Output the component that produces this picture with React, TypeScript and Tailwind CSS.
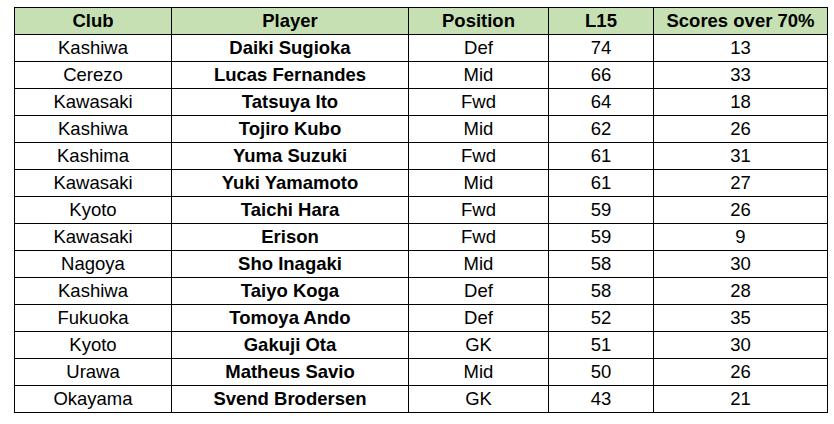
const rows: [string, string, string, number, number][] = [
  ["Kashiwa", "Daiki Sugioka", "Def", 74, 13],
  ["Cerezo", "Lucas Fernandes", "Mid", 66, 33],
  ["Kawasaki", "Tatsuya Ito", "Fwd", 64, 18],
  ["Kashiwa", "Tojiro Kubo", "Mid", 62, 26],
  ["Kashima", "Yuma Suzuki", "Fwd", 61, 31],
  ["Kawasaki", "Yuki Yamamoto", "Mid", 61, 27],
  ["Kyoto", "Taichi Hara", "Fwd", 59, 26],
  ["Kawasaki", "Erison", "Fwd", 59, 9],
  ["Nagoya", "Sho Inagaki", "Mid", 58, 30],
  ["Kashiwa", "Taiyo Koga", "Def", 58, 28],
  ["Fukuoka", "Tomoya Ando", "Def", 52, 35],
  ["Kyoto", "Gakuji Ota", "GK", 51, 30],
  ["Urawa", "Matheus Savio", "Mid", 50, 26],
  ["Okayama", "Svend Brodersen", "GK", 43, 21],
];

const cell = "border border-black h-[27px] p-0 text-center leading-none";

export default function App() {
  return (
    <div className="w-[834px] h-[424px] bg-white pt-[7px] pl-[14px] font-['Liberation_Sans',Arial,sans-serif] text-[18.5px] text-black">
      <table className="border-collapse table-fixed w-[813px]">
        <colgroup>
          <col className="w-[157px]" />
          <col className="w-[237px]" />
          <col className="w-[140px]" />
          <col className="w-[105px]" />
          <col className="w-[174px]" />
        </colgroup>
        <thead>
          <tr className="bg-[#c6e0b4]">
            {["Club", "Player", "Position", "L15", "Scores over 70%"].map((h) => (
              <th key={h} className={`${cell} font-bold`}>
                {h}
              </th>
            ))}
          </tr>
        </thead>
        <tbody>
          {rows.map(([club, player, pos, l15, over]) => (
            <tr key={player}>
              <td className={cell}>{club}</td>
              <td className={`${cell} font-bold`}>{player}</td>
              <td className={cell}>{pos}</td>
              <td className={cell}>{l15}</td>
              <td className={cell}>{over}</td>
            </tr>
          ))}
        </tbody>
      </table>
    </div>
  );
}
